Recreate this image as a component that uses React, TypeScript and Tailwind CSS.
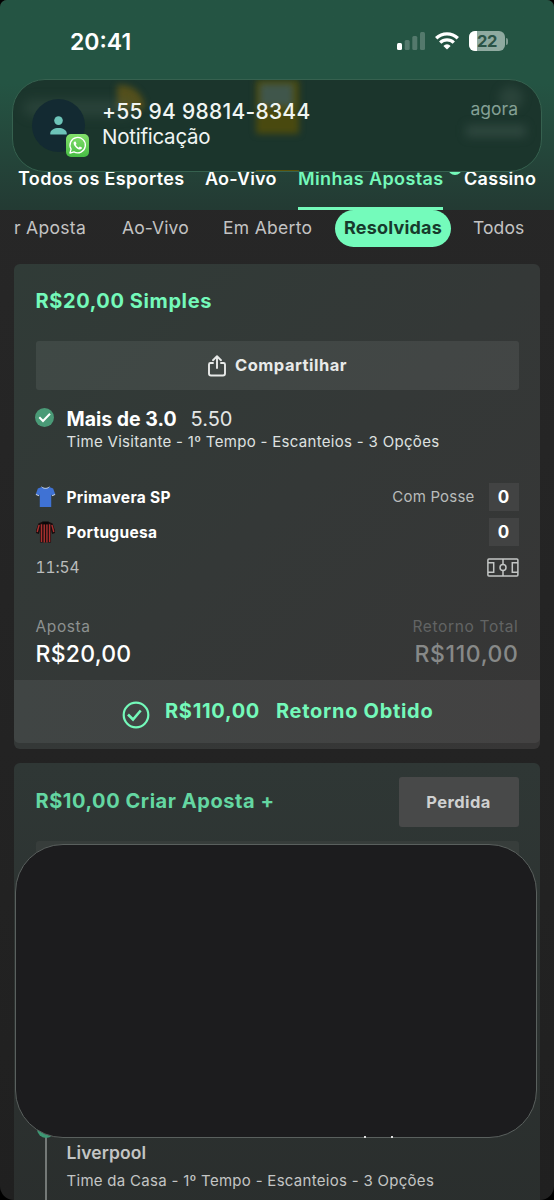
const tabs = [
  { label: "Todos os Esportes", className: "w-[187px] text-white tracking-[0.35px]" },
  { label: "Ao-Vivo", className: "w-[93px] text-white tracking-[0.2px]" },
  { label: "Minhas Apostas", className: "w-[166px] text-[#74f9ba] tracking-[0.4px]" },
  { label: "Cassino", className: "w-[76px] text-white tracking-[0.3px]" },
]

const teams = [
  { name: "Primavera SP", score: 0, possession: true, shirt: "blue" },
  { name: "Portuguesa", score: 0, possession: false, shirt: "striped" },
]

function StatusBar() {
  return (
    <div className="flex h-[82px] shrink-0 items-center pl-[70px] pr-[46px] text-white">
      <span className="mt-[2px] flex-1 text-[23px] font-semibold leading-none tracking-[0px]">20:41</span>
      <svg width="28" height="18" viewBox="0 0 28 18" fill="#fff">
        <rect x="0" y="11" width="5" height="7" rx="1.5" />
        <rect x="7.7" y="8" width="5" height="10" rx="1.5" opacity=".22" />
        <rect x="15.3" y="4" width="5" height="14" rx="1.5" opacity=".22" />
        <rect x="23" y="0" width="5" height="18" rx="1.5" opacity=".22" />
      </svg>
      <svg className="ml-[10px]" width="24" height="18" viewBox="0 0 24 18" fill="none" stroke="#fff" strokeWidth="3.3">
        <path d="M1.2 6.2a15.4 15.4 0 0 1 21.6 0" />
        <path d="M5.2 10.6a9.7 9.7 0 0 1 13.6 0" />
        <path d="M12 17.6l-3.6-3.7a5 5 0 0 1 7.2 0z" fill="#fff" stroke="none" />
      </svg>
      <div className="relative ml-[10px] flex h-5 w-9 items-center justify-center overflow-hidden rounded-[6px] bg-[#8faaa0]">
        <div className="absolute inset-y-0 left-0 w-2 bg-white" />
        <span className="relative text-[16.5px] font-bold leading-none tracking-[-0.4px] text-[#2b5346]">22</span>
      </div>
      <div className="ml-[1px] h-[7px] w-[2px] rounded-r-full bg-[#7d9b90]" />
    </div>
  )
}

function WhatsAppBadge() {
  return (
    <div className="absolute left-[34px] top-[35px] flex size-[23px] items-center justify-center rounded-[5px] bg-gradient-to-b from-[#83e06c] to-[#45bd44]">
      <svg width="19" height="19" viewBox="0 0 24 24" fill="none" stroke="#fff" strokeWidth="1.7">
        <path d="M2.5 21.5l1.4-5A9.7 9.7 0 1 1 7.5 20z" strokeLinejoin="round" />
        <path
          d="M8.5 6.8c-.6.1-1.4.9-1.4 2.2 0 3 4.6 8 8.1 8 1.4 0 2.4-.9 2.5-2.2 0-.4-2.6-1.7-2.9-1.5l-1.2 1.4c-1.5-.5-3.2-2.1-3.8-3.5l.9-1.2c.1-.3-.9-3-1.2-3.2z"
          fill="#fff"
          stroke="none"
        />
      </svg>
    </div>
  )
}

function Notification() {
  return (
    <div className="absolute left-[12px] top-[79px] z-20 flex h-[93px] w-[530px] overflow-hidden rounded-[33px] border border-[#36614f] bg-[#1b352c]">
      {/* app header showing through the glass */}
      <div className="absolute left-[104px] top-[5px] h-6 w-7 rounded-tr-full bg-[#7a610f]/60 blur-[3px]" />
      <div className="absolute left-[10px] top-[20px] h-4 w-28 rounded-full bg-[#4b625b]/30 blur-[6px]" />
      <div className="absolute left-[243px] top-0 h-[54px] w-[43px] bg-[#4f4b0c]/90 blur-[3px]" />
      <div className="absolute left-[247px] top-[4px] h-[22px] w-[33px] bg-[#3f5852]/90 blur-[3px]" />
      <div className="absolute left-[453px] top-[45px] h-3 w-[60px] bg-[#4b625b]/40 blur-[5px]" />
      <div className="absolute left-[486px] top-[6px] size-6 rounded-full bg-[#4b625b]/30 blur-[5px]" />
      <div className="absolute left-[243px] top-[90px] h-px w-[43px] bg-[#57520a]" />

      <div className="relative ml-[19px] mt-[19px] flex size-[53px] items-center justify-center rounded-full bg-[#132a32]">
        <svg width="17" height="19" viewBox="0 0 17 19" fill="#6dc4b9">
          <circle cx="8.5" cy="4.6" r="4.3" />
          <path d="M.3 18.5v-1.2c0-3.2 4-5.200 8.200-5.200s8.200 2 8.200 5.200v1.200z" />
        </svg>
        <WhatsAppBadge />
      </div>
      <div className="relative ml-[17px] mt-[19px] flex-1 whitespace-nowrap text-[#f0f5f3]">
        <p className="text-[21px] font-medium leading-[26px] tracking-[0.26px]">+55 94 98814-8344</p>
        <p className="text-[20.5px] leading-[24px] tracking-[-0.25px]">Notificação</p>
      </div>
      <span className="relative mr-[23px] mt-[18px] text-[17.5px] leading-[22px] tracking-[0px] text-[#84a095]">agora</span>
    </div>
  )
}

function ShareIcon() {
  return (
    <svg width="20" height="22" viewBox="0 0 20 22" fill="none" stroke="#e8eae9" strokeWidth="1.9" strokeLinecap="round" strokeLinejoin="round">
      <path d="M6 8H3.5A1.5 1.5 0 0 0 2 9.5v9A2 2 0 0 0 4 20.5h12a2 2 0 0 0 2-2v-9A1.5 1.5 0 0 0 16.5 8H14" />
      <path d="M10 13V1.5M6 5.2l4-3.9 4 3.9" />
    </svg>
  )
}

function Shirt({ kind }: { kind: string }) {
  if (kind === "blue") {
    return (
      <svg className="-ml-[0.5px] mb-[1px]" width="21" height="24" viewBox="0 0 22 24">
        <path
          d="M7 1.5L3 3.2 .8 9.2l3.500 1.500.7-1.500V22.500h12V9.200l.7 1.500 3.500-1.500L19 3.200 15 1.500c-1.500 1.500-6.500 1.500-8 0z"
          fill="#3f72d4"
        />
        <path d="M7 1.2c1.700 2.300 6.300 2.300 8 0M.9 9.300l3.200 1.400M21.100 9.300l-3.200 1.400" fill="none" stroke="#d9dfe8" strokeWidth="1" />
      </svg>
    )
  }
  return (
    <svg className="-ml-[0.5px]" width="21" height="24" viewBox="0 0 22 24">
      <path d="M7 1.5L3.5 3.2 1.2 10l-.2 3 3 1 1.200-4V23h11.600V10l1.200 4 3-1-.2-3-2.300-6.800L15 1.500z" fill="#180d0e" />
      <path d="M6.8 4v18.500M9.700 4v19M12.500 4v19M15.300 4v18.500M4.300 4.500L2.300 12M17.700 4.500l2 7.500" stroke="#a8302f" strokeWidth="1.5" />
      <path d="M7.5 1h7l-1 3h-5z" fill="#0b0808" />
    </svg>
  )
}

function PitchIcon() {
  return (
    <svg width="32" height="19" viewBox="0 0 32 19" fill="none" stroke="#c3c6c5" strokeWidth="1.5">
      <rect x=".9" y=".9" width="30" height="17.2" rx="1" />
      <path d="M16 1v5.5M16 12.5V18M1 4.8h5.7v9.4H1M31 4.8h-5.7v9.4H31" />
      <circle cx="16" cy="9.5" r="3" />
    </svg>
  )
}

export default function App() {
  return (
    <div className="h-[1200px] w-[554px] overflow-hidden bg-black font-['Inter',sans-serif]">
      <div className="relative h-full w-full overflow-hidden rounded-t-[7px] rounded-b-[14px] bg-gradient-to-b from-[#282828] to-[#202020]">
        <header className="flex h-[210px] flex-col justify-between bg-gradient-to-b from-[#245443] from-40% to-[#233a33]">
          <StatusBar />
          <nav className="flex h-[42px] pl-[18px]">
            {tabs.map((tab) => (
              <div key={tab.label} className={`shrink-0 whitespace-nowrap text-[18px] font-semibold leading-[21px] ${tab.className}`}>
                {tab.label}
                {tab.label === "Minhas Apostas" && <div className="mt-[18px] h-[3px] w-[145px] bg-[#74f9ba]" />}
              </div>
            ))}
          </nav>
        </header>
        <div className="absolute left-[448px] top-[161px] size-[14px] rounded-full bg-[#74f9ba]" />

        <div className="flex h-[54px] items-start whitespace-nowrap pl-[14px] text-[17.5px] leading-[35px] text-[#c3c3c3]">
          <span className="w-[108px] tracking-[0.3px]">r Aposta</span>
          <span className="w-[101px] tracking-[0.1px]">Ao-Vivo</span>
          <span className="w-[112px] tracking-[0.3px]">Em Aberto</span>
          <span className="h-[37px] w-[116px] rounded-full bg-[#74fbbb] text-center text-[18px] font-bold tracking-[0.2px] text-[#173a2c]">Resolvidas</span>
          <span className="ml-[22px] tracking-[0.1px]">Todos</span>
        </div>

        <section className="mx-[14px] flex h-[485px] w-[526px] flex-col rounded-[6px] bg-gradient-to-br from-[#303b37] via-[#343837] to-[#373636] pb-[6px]">
          <div className="flex-1 px-[21.5px]">
            <h2 className="pt-[24px] text-[20px] font-bold leading-[26px] tracking-[0.6px] text-[#74f9ba]">R$20,00 Simples</h2>
            <button className="mt-[27px] flex h-[49px] w-full items-center justify-center gap-[8px] rounded-[3px] bg-[#ffffff]/[0.07] text-[16.5px] font-bold tracking-[0.5px] text-[#e8eae9]">
              <ShareIcon />
              <span>Compartilhar</span>
            </button>

            <div className="mt-[15px] flex h-[27px] items-center text-[20px] leading-[27px] text-white">
              <svg className="-ml-[1px] mb-[2px]" width="19" height="19" viewBox="0 0 19 19" fill="none">
                <circle cx="9.5" cy="9.5" r="9.5" fill="#4a9a77" />
                <path d="M4.3 9.3l3.7 3.700 7-7.200" stroke="#fff" strokeWidth="2" />
              </svg>
              <span className="ml-[13px] pt-[1px] text-[19.5px] font-bold tracking-[0px]">Mais de 3.0</span>
              <span className="ml-[14px] pt-[1px] text-[#e3e6e5]">5.50</span>
            </div>
            <p className="ml-[31px] whitespace-nowrap text-[15px] leading-[20px] tracking-[0.31px] text-[#dfe1e0]">
              Time Visitante - 1º Tempo - Escanteios - 3 Opções
            </p>

            <div className="mt-[31px] flex flex-col gap-[7px]">
              {teams.map((team) => (
                <div key={team.name} className="flex h-[28px] items-center text-[15.5px]">
                  <Shirt kind={team.shirt} />
                  <span className="ml-[10.5px] flex-1 pt-[1px] font-bold tracking-[0.3px] text-white">{team.name}</span>
                  {team.possession && <span className="mr-[14px] pt-[1px] text-[15px] tracking-[0.2px] text-[#b9bcbb]">Com Posse</span>}
                  <span className="flex h-[28px] w-[30px] items-center justify-center bg-[#424343] pt-[1px] text-[17px] font-bold text-white">{team.score}</span>
                </div>
              ))}
            </div>
            <div className="mt-[11px] flex h-[21px] items-center justify-between">
              <span className="text-[15.5px] tabular-nums tracking-[-0.1px] text-[#babdbc]">11:54</span>
              <PitchIcon />
            </div>

            <div className="mt-[38px] flex justify-between">
              <div>
                <p className="text-[15.5px] leading-[21px] tracking-[0.6px] text-[#8d9190]">Aposta</p>
                <p className="mt-[2px] text-[23px] font-medium leading-[30px] tracking-[0.25px] text-white">R$20,00</p>
              </div>
              <div className="text-right">
                <p className="text-[15.5px] leading-[21px] tracking-[0.65px] text-[#626464]">Retorno Total</p>
                <p className="mt-[2px] text-[23px] font-medium leading-[30px] tracking-[0.6px] text-[#878988]">R$110,00</p>
              </div>
            </div>
          </div>
          <div className="flex h-[63px] items-center rounded-b-[5px] bg-gradient-to-r from-[#404544] to-[#434242] pl-[108px] text-[20px] font-semibold leading-none text-[#74f9ba]">
            <svg className="mt-[6px]" width="28" height="28" viewBox="0 0 28 28" fill="none" stroke="#74f9ba" strokeWidth="2.2">
              <circle cx="14" cy="14" r="12.3" />
              <path d="M6 13.5l5 5 7.7-9" strokeWidth="2.6" />
            </svg>
            <span className="mb-[2px] ml-[15px] w-[96px] whitespace-nowrap font-bold tracking-[0.7px]">R$110,00</span>
            <span className="mb-[2px] ml-[15px] font-bold tracking-[0.7px]">Retorno Obtido</span>
          </div>
        </section>

        <section className="mx-[14px] mt-[14px] h-[460px] w-[526px] rounded-t-[6px] bg-gradient-to-b from-[#2f3735] to-[#2a2e2d] px-[21.5px] pt-[14px]">
          <div className="flex h-[50px] items-center justify-between">
            <h2 className="pb-[2px] text-[20px] font-bold tracking-[0.55px] text-[#64d7a2]">R$10,00 Criar Aposta +</h2>
            <button className="h-[50px] w-[120px] rounded-[3px] bg-[#484949] text-[16.5px] font-bold tracking-[0.45px] text-[#cfd0d0]">Perdida</button>
          </div>
          <div className="mt-[14px] h-[49px] rounded-[3px] bg-[#373d3b]" />
          <div className="mt-[237px] flex">
            <div className="relative ml-[9px] w-[2px] bg-[#747977]">
              <div className="absolute -left-[8px] top-[-7px] size-[18px] rounded-full bg-[#3d9874]" />
            </div>
            <div className="ml-[20px] h-[90px] pt-[14px] text-[#c3c5c4]">
              <p className="text-[17.5px] font-semibold leading-[24px] tracking-[0.1px]">Liverpool</p>
              <p className="mt-[4px] whitespace-nowrap text-[15px] leading-[24px] tracking-[0.29px]">Time da Casa - 1º Tempo - Escanteios - 3 Opções</p>
            </div>
          </div>
        </section>

        <div className="absolute left-[14.5px] top-[844px] z-10 h-[293.5px] w-[522px] rounded-[48px] border-[1.5px] border-[#5a605e] bg-[#1c1c1e]">
          <div className="absolute -bottom-[1px] left-[348px] h-[2px] w-[2px] bg-[#dedede]" />
          <div className="absolute -bottom-[1px] left-[375px] h-[2px] w-[2px] bg-[#dedede]" />
        </div>
        <Notification />
      </div>
    </div>
  )
}
